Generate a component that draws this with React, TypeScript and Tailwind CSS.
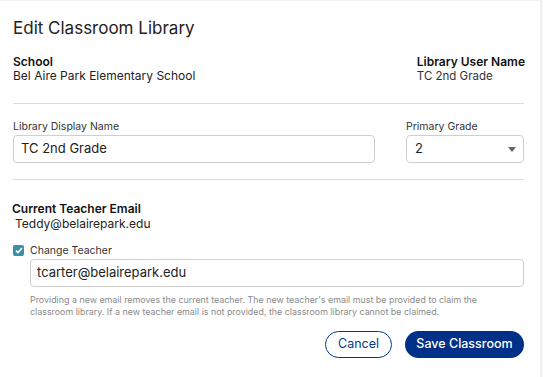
export default function App() {
  return (
    <div className="flex w-[543px] h-[377px] bg-[#f2f2f2] font-['Inter',sans-serif] text-[#1f1f1f]">
      <div className="flex-1 bg-white mt-px mr-[3px] pl-[13px] pr-[16px] pt-[15px]">
        {/* Title */}
        <h1 className="text-[17px] leading-6 font-normal text-[#222]">Edit Classroom Library</h1>

        {/* School / user name */}
        <div className="flex justify-between mt-[15px]">
          <div>
            <p className="text-[12px] leading-[14px] font-semibold text-[#111]">School</p>
            <p className="text-[12px] leading-[14px] text-[#222]">Bel Aire Park Elementary School</p>
          </div>
          <div className="mr-[-1px]">
            <p className="text-[12px] leading-[14px] font-semibold text-[#111]">Library User Name</p>
            <p className="text-[11.5px] leading-[15px] text-[#333]">TC 2nd Grade</p>
          </div>
        </div>

        <div className="h-px bg-[#dcdcdc] mt-[19px]" />

        {/* Display name / grade */}
        <div className="flex gap-[31px] mt-[16px]">
          <div className="w-[362px]">
            <p className="text-[10.5px] leading-[13px] text-[#333]">Library Display Name</p>
            <div className="mt-[2px] h-[28px] border border-[#cfcfcf] rounded-[4px] flex items-center px-[7px] text-[13px] text-[#222]">
              TC 2nd Grade
            </div>
          </div>
          <div className="flex-1">
            <p className="text-[10.5px] leading-[13px] text-[#333]">Primary Grade</p>
            <div className="mt-[2px] h-[28px] border border-[#cfcfcf] rounded-[4px] flex items-center justify-between pl-[8px] pr-[7px] text-[13px] text-[#222]">
              <span>2</span>
              <svg width="8" height="5" viewBox="0 0 8 5">
                <path d="M0 0h8L4 5z" fill="#666" />
              </svg>
            </div>
          </div>
        </div>

        <div className="h-px bg-[#dcdcdc] mt-[16px]" />

        {/* Current teacher */}
        <div className="mt-[22px] -ml-px">
          <p className="text-[12px] leading-[14px] font-semibold text-[#111]">Current Teacher Email</p>
          <p className="text-[12px] leading-[16px] text-[#222] ml-[3px]">Teddy@belairepark.edu</p>
        </div>

        <label className="flex items-center gap-[6px] mt-[12px]">
          <span className="w-[11px] h-[11px] rounded-[2px] bg-[#3a8ea8] flex items-center justify-center">
            <svg width="8" height="7" viewBox="0 0 8 7">
              <path d="M1 3.6l2 2L7 1" stroke="white" strokeWidth="1.6" fill="none" />
            </svg>
          </span>
          <span className="text-[10.5px] leading-[13px] text-[#333]">Change Teacher</span>
        </label>

        <div className="ml-[17px]">
          <div className="mt-[2px] h-[28px] border border-[#cfcfcf] rounded-[4px] flex items-center px-[6px] text-[13px] text-[#222]">
            tcarter@belairepark.edu
          </div>
          <p className="mt-[7px] pr-[24px] text-[8.9px] leading-[12px] text-[#8a8a8a]">
            Providing a new email removes the current teacher. The new teacher's email must be provided to claim the classroom library. If a new teacher email is not provided, the classroom library cannot be claimed.
          </p>
        </div>

        {/* Actions */}
        <div className="flex justify-end gap-[13px] mt-[13px]">
          <button className="h-[27px] w-[67px] rounded-full border border-[#003a8c] text-[#003a8c] text-[12.5px]">
            Cancel
          </button>
          <button className="h-[27px] w-[119px] rounded-full bg-[#003087] text-white text-[12.5px] font-medium">
            Save Classroom
          </button>
        </div>
      </div>
    </div>
  )
}
